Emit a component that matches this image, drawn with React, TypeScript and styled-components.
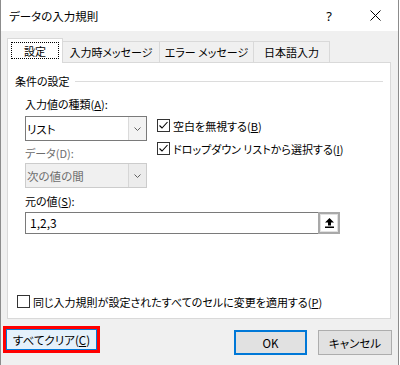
import React from 'react';
import styled, {createGlobalStyle} from 'styled-components';

const GlobalStyle = createGlobalStyle`
  html, body {
    margin: 0;
    padding: 0;
    background: #ffffff;
  }
  body {
    font-family: "Noto Sans CJK JP", "Noto Sans", sans-serif;
    font-size: 11px;
    color: #000000;
    font-feature-settings: "palt";
  }
  u {
    text-underline-offset: 1px;
  }
`

const Window = styled.div`
  width: 399px;
  height: 365px;
  box-sizing: border-box;
  border-left: 1px solid #8c8c8c;
  border-right: 1px solid #8c8c8c;
  display: flex;
  flex-direction: column;
  overflow: hidden;
`

const TitleBar = styled.div`
  height: 31px;
  flex: none;
  background: #ffffff;
  display: flex;
  align-items: center;
  & > .title {
    padding-left: 8px;
    line-height: 16px;
    font-size: 11.5px;
    flex: 1;
  }
`

const CaptionButton = styled.div`
  width: 46px;
  height: 31px;
  display: flex;
  align-items: center;
  justify-content: center;
  font-family: "Noto Sans", sans-serif;
  font-size: 13px;
`

const Body = styled.div`
  flex: 1;
  background: #f0f0f0;
  padding: 7px 7px 0 6px;
  display: flex;
  flex-direction: column;
`

const TabStrip = styled.div`
  height: 24px;
  display: flex;
  align-items: flex-end;
  position: relative;
  z-index: 1;
`

const Tab = styled.div<{$w: number; $active?: boolean}>`
  width: ${p => p.$w}px;
  height: ${p => (p.$active ? 25 : 21)}px;
  margin-bottom: ${p => (p.$active ? -1 : 0)}px;
  box-sizing: border-box;
  border: 1px solid #d9d9d9;
  border-bottom: none;
  background: ${p => (p.$active ? '#ffffff' : '#f0f0f0')};
  position: relative;
  z-index: ${p => (p.$active ? 2 : 1)};
  display: flex;
  align-items: ${p => (p.$active ? 'flex-start' : 'center')};
  justify-content: center;
  padding: ${p => (p.$active ? '3px 3px 0' : '0')};
  line-height: 16px;
  white-space: nowrap;
  & + & {
    margin-left: -1px;
  }
`

const FocusRect = styled.div`
  flex: 1;
  height: 17px;
  box-sizing: border-box;
  border: 1px dotted #000000;
  display: flex;
  align-items: center;
  justify-content: center;
`

const Panel = styled.div`
  height: 257px;
  box-sizing: border-box;
  border: 1px solid #d9d9d9;
  background: #ffffff;
  display: flex;
  flex-direction: column;
  padding: 9px 7px 7px 7px;
`

const GroupHeader = styled.div`
  height: 18px;
  display: flex;
  align-items: center;
  gap: 5px;
  line-height: 16px;
  &::after {
    content: '';
    flex: 1;
    height: 1px;
    background: #dcdcdc;
  }
`

const Fields = styled.div`
  padding-left: 10px;
  margin-top: 6px;
  display: flex;
  flex-direction: column;
`

const FieldLabel = styled.div<{$mt?: number; $disabled?: boolean}>`
  height: 16px;
  line-height: 16px;
  margin-top: ${p => p.$mt || 0}px;
  color: ${p => (p.$disabled ? '#6d6d6d' : '#000000')};
`

const Split = styled.div`
  display: flex;
  gap: 10px;
  margin-top: 4px;
`

const LeftCol = styled.div`
  width: 122px;
  display: flex;
  flex-direction: column;
`

const RightCol = styled.div`
  display: flex;
  flex-direction: column;
  gap: 4px;
`

const Select = styled.div<{$mt?: number; $disabled?: boolean}>`
  height: 25px;
  margin-top: ${p => p.$mt || 0}px;
  box-sizing: border-box;
  border: 1px solid ${p => (p.$disabled ? '#cccccc' : '#7a7a7a')};
  background: ${p => (p.$disabled ? '#f0f0f0' : '#ffffff')};
  color: ${p => (p.$disabled ? '#6d6d6d' : '#000000')};
  display: flex;
  & > .value {
    flex: 1;
    padding-left: 1px;
    display: flex;
    align-items: center;
    line-height: 16px;
    font-size: 11.5px;
  }
  & > .arrow {
    width: 17px;
    border-left: 1px solid ${p => (p.$disabled ? '#d6d6d6' : '#dadada')};
    background: ${p => (p.$disabled ? '#ececec' : '#f3f3f3')};
    display: flex;
    align-items: center;
    justify-content: center;
  }
`

const CheckRow = styled.div<{$ml?: number}>`
  height: 19px;
  display: flex;
  align-items: center;
  gap: 3px;
  margin-left: ${p => p.$ml || 0}px;
  line-height: 16px;
  white-space: nowrap;
`

const Box = styled.span`
  width: 13px;
  height: 13px;
  box-sizing: border-box;
  border: 1px solid #333333;
  background: #ffffff;
  display: flex;
  align-items: center;
  justify-content: center;
  flex: none;
`

const SourceRow = styled.div`
  height: 22px;
  width: 315px;
  margin-top: 3px;
  display: flex;
  & > .input {
    flex: 1;
    box-sizing: border-box;
    border: 1px solid #7a7a7a;
    border-right: none;
    padding-left: 4px;
    display: flex;
    align-items: center;
    line-height: 16px;
    font-size: 12px;
  }
`

const RefButton = styled.div`
  width: 22px;
  height: 22px;
  box-sizing: border-box;
  border: 2px solid #a9a9a9;
  box-shadow: inset 0 0 0 1px #e1e1e1;
  background: #ffffff;
  display: flex;
  align-items: center;
  justify-content: center;
`

const Bottom = styled.div`
  margin-top: auto;
`

const ButtonRow = styled.div`
  display: flex;
  align-items: flex-start;
  padding-top: 7px;
`

const ClearFrame = styled.div`
  width: 97px;
  height: 27px;
  margin-left: -4px;
  box-sizing: border-box;
  border: 3px solid #ff0000;
  display: flex;
`

const Button = styled.div<{$w?: number; $primary?: boolean; $focus?: boolean}>`
  width: ${p => (p.$w ? `${p.$w}px` : '100%')};
  height: ${p => (p.$w ? '25px' : '100%')};
  box-sizing: border-box;
  border: ${p => (p.$primary ? '2px solid #0078d7' : p.$focus ? '1px solid #0078d7' : '1px solid #adadad')};
  background: ${p => (p.$focus ? '#e5f1fb' : '#e1e1e1')};
  display: flex;
  align-items: center;
  justify-content: center;
  line-height: 16px;
  font-size: 11.5px;
  white-space: nowrap;
`

const RightButtons = styled.div`
  margin-left: auto;
  margin-right: -1px;
  margin-top: 4px;
  display: flex;
  gap: 11px;
`

const Chevron = () => (
    <svg width="7" height="4" viewBox="0 0 7 4">
        <path d="M0.5 0.5 L3.5 3.5 L6.5 0.5" fill="none" stroke="#606060" strokeWidth="1"/>
    </svg>
)

const Check = () => (
    <svg width="11" height="11" viewBox="0 0 11 11">
        <path d="M1.5 5.5 L4 8 L9.5 2" fill="none" stroke="#000000" strokeWidth="1.1"/>
    </svg>
)

const CheckBox = ({checked, label, ml}: {checked?: boolean; label: React.ReactNode; ml?: number}) => (
    <CheckRow $ml={ml}>
        <Box>{checked && <Check/>}</Box>
        <span>{label}</span>
    </CheckRow>
)

export default function App() {
    return (
        <>
            <GlobalStyle/>
            <Window>
                <TitleBar>
                    <div className={'title'}>データの入力規則</div>
                    <CaptionButton>?</CaptionButton>
                    <CaptionButton>
                        <svg width="11" height="11" viewBox="0 0 11 11">
                            <path d="M0.5 0.5 L10.5 10.5 M10.5 0.5 L0.5 10.5" stroke="#000000" strokeWidth="1"/>
                        </svg>
                    </CaptionButton>
                </TitleBar>
                <Body>
                    <TabStrip>
                        <Tab $w={56} $active><FocusRect>設定</FocusRect></Tab>
                        <Tab $w={98}>入力時メッセージ</Tab>
                        <Tab $w={95}>エラー メッセージ</Tab>
                        <Tab $w={77}>日本語入力</Tab>
                    </TabStrip>
                    <Panel>
                        <GroupHeader>条件の設定</GroupHeader>
                        <Fields>
                            <FieldLabel>入力値の種類(<u>A</u>):</FieldLabel>
                            <Split>
                                <LeftCol>
                                    <Select>
                                        <div className={'value'}>リスト</div>
                                        <div className={'arrow'}><Chevron/></div>
                                    </Select>
                                    <FieldLabel $mt={4} $disabled>データ(D):</FieldLabel>
                                    <Select $mt={2} $disabled>
                                        <div className={'value'}>次の値の間</div>
                                        <div className={'arrow'}><Chevron/></div>
                                    </Select>
                                </LeftCol>
                                <RightCol>
                                    <CheckBox checked label={<>空白を無視する(<u>B</u>)</>}/>
                                    <CheckBox checked label={<>ドロップダウン リストから選択する(<u>I</u>)</>}/>
                                </RightCol>
                            </Split>
                            <FieldLabel $mt={5}>元の値(<u>S</u>):</FieldLabel>
                            <SourceRow>
                                <div className={'input'}>1,2,3</div>
                                <RefButton>
                                    <svg width="9" height="10" viewBox="0 0 9 10">
                                        <path d="M4.5 0 L9 4.5 L6 4.5 L6 7.5 L3 7.5 L3 4.5 L0 4.5 Z" fill="#000000"/>
                                        <rect x="0" y="8.5" width="9" height="1.5" fill="#000000"/>
                                    </svg>
                                </RefButton>
                            </SourceRow>
                        </Fields>
                        <Bottom>
                            <CheckBox ml={2} label={<>同じ入力規則が設定されたすべてのセルに変更を適用する(<u>P</u>)</>}/>
                        </Bottom>
                    </Panel>
                    <ButtonRow>
                        <ClearFrame>
                            <Button $focus>すべてクリア(<u>C</u>)</Button>
                        </ClearFrame>
                        <RightButtons>
                            <Button $w={73} $primary>OK</Button>
                            <Button $w={74}>キャンセル</Button>
                        </RightButtons>
                    </ButtonRow>
                </Body>
            </Window>
        </>
    );
}
